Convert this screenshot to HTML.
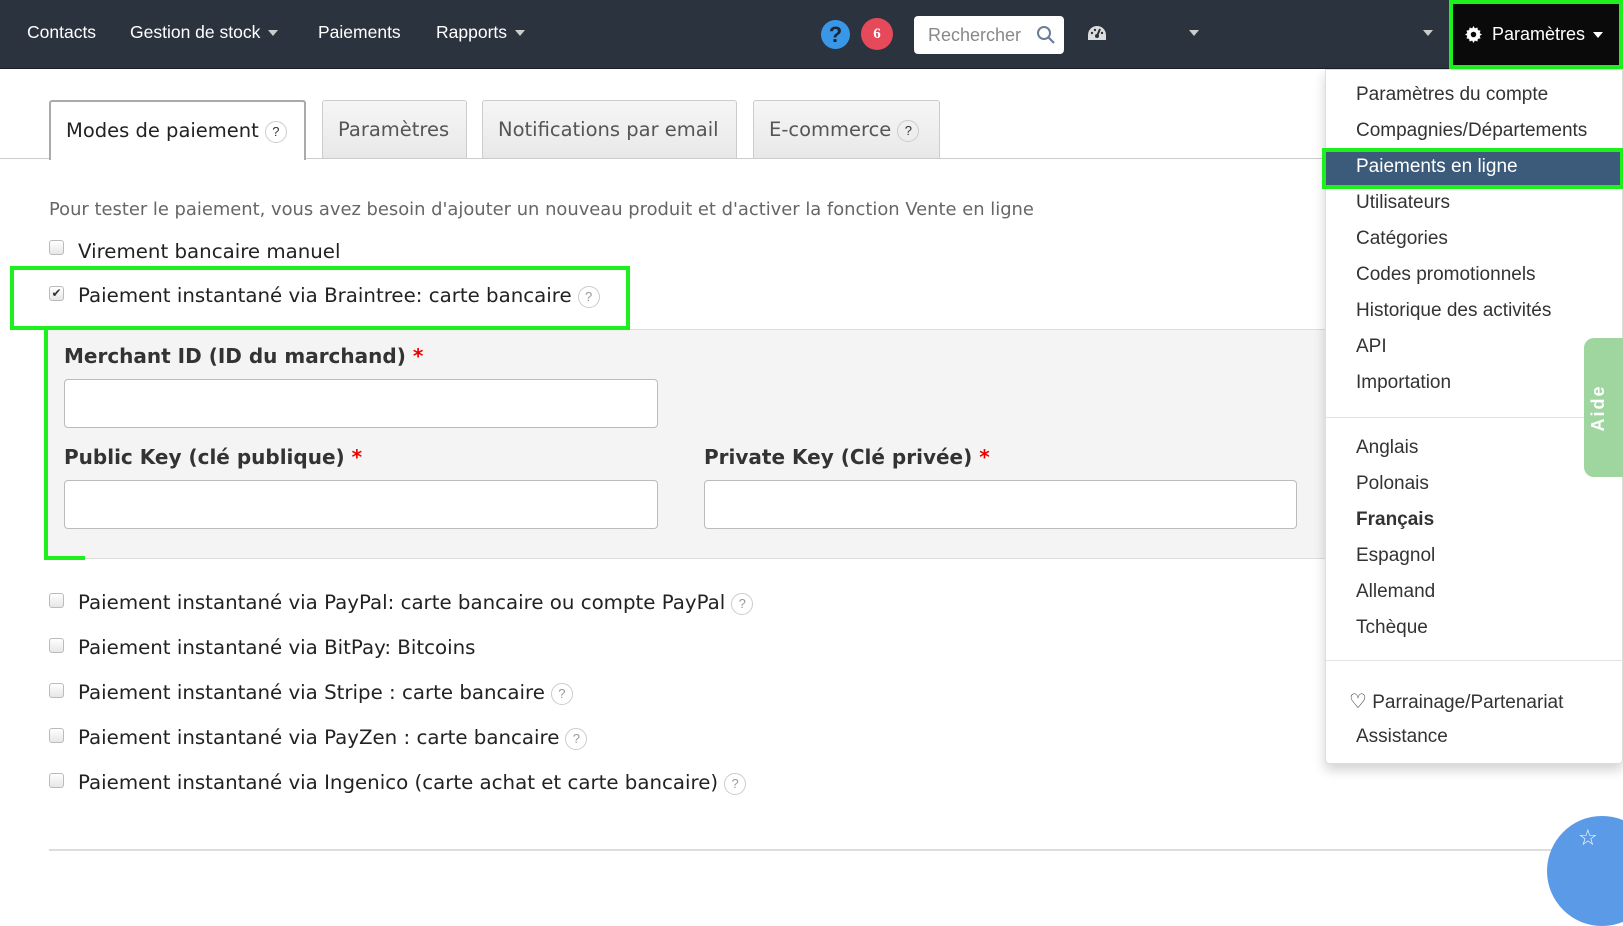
<!DOCTYPE html>
<html><head><meta charset="utf-8"><style>
*{box-sizing:border-box;margin:0;padding:0}
body{width:1623px;height:874px;overflow:hidden;background:#fff;font-family:"DejaVu Sans","Liberation Sans",sans-serif;color:#222;position:relative}
.nav{position:absolute;left:0;top:0;width:1623px;height:69px;background:#2b333e;border-bottom:1px solid #1a1f26}
.nav .it{position:absolute;top:22px;color:#fff;font:17.5px "Liberation Sans",sans-serif}
.car{display:inline-block;width:0;height:0;border-left:5px solid transparent;border-right:5px solid transparent;border-top:6px solid #ccc;vertical-align:middle;margin-left:8px}
.abs{position:absolute}
.tab{position:absolute;top:100px;height:58px;border:1px solid #ccc;border-bottom:none;border-radius:3px 3px 0 0;background:linear-gradient(#f6f6f6,#e8e8e8);font-size:19.5px;color:#555;padding:17px 15px 0}
.tab.on{background:#fff;color:#222;border:2px solid #aaa;border-bottom:none;height:60px}
.q{display:inline-block;width:22px;height:22px;border:1.5px solid #ccc;border-radius:50%;font-size:13px;color:#999;text-align:center;line-height:19px;vertical-align:middle;margin-left:6px;font-family:"Liberation Sans",sans-serif}
.cb{position:absolute;left:49px;width:15px;height:15px;border:1px solid #bbb;border-radius:3px;background:linear-gradient(#fff,#e6e6e6)}
.lbl{position:absolute;left:78px;font-size:19.8px;color:#222}
.fl{position:absolute;font-size:20px;font-weight:bold;color:#333}
.fl b{color:#e00}
.inp{position:absolute;height:49px;background:#fff;border:1px solid #bbb;border-radius:4px}
.dd{position:absolute;left:1325px;top:69px;width:298px;height:695px;background:#fff;border:1px solid #ddd;border-radius:0 0 4px 4px;box-shadow:0 6px 12px rgba(0,0,0,.18)}
.dd .m{position:absolute;left:30px;font:19px "Liberation Sans",sans-serif;color:#333}
.hr{position:absolute;left:0;width:298px;height:1px;background:#e2e2e2}
</style></head><body>
<div class="nav">
<span class="it" style="left:27px">Contacts</span>
<span class="it" style="left:130px">Gestion de stock<span class="car"></span></span>
<span class="it" style="left:318px">Paiements</span>
<span class="it" style="left:436px">Rapports<span class="car"></span></span>
<div class="abs" style="left:821px;top:20px;width:29px;height:29px;border-radius:50%;background:#3a97e8;color:#1b2533;font:bold 22px 'Liberation Sans';text-align:center;line-height:29px">?</div>
<div class="abs" style="left:861px;top:18px;width:32px;height:32px;border-radius:50%;background:#e64a5a;color:#fff;font:bold 15px 'Liberation Serif';text-align:center;line-height:32px">6</div>
<div class="abs" style="left:914px;top:16px;width:150px;height:38px;border-radius:4px;background:#fff;color:#888;font:18px 'Liberation Sans';padding:9px 14px">Rechercher
<svg class="abs" style="left:122px;top:9px" width="20" height="20" viewBox="0 0 20 20"><circle cx="8" cy="8" r="6" fill="none" stroke="#6a7d96" stroke-width="2"/><path d="M12.5 12.5L18 18" stroke="#6a7d96" stroke-width="2.2"/></svg></div>
<svg class="abs" style="left:1087px;top:24px" width="20" height="18" viewBox="0 0 20 18"><path d="M10 2A9 9 0 0 0 1 11v5h18v-5A9 9 0 0 0 10 2Z" fill="#ddd"/><circle cx="10" cy="12" r="2" fill="#2b333e"/><path d="M10 12L13 5" stroke="#2b333e" stroke-width="2"/><circle cx="5" cy="9" r="1.2" fill="#2b333e"/><circle cx="15" cy="9" r="1.2" fill="#2b333e"/><circle cx="8" cy="6" r="1.2" fill="#2b333e"/></svg>
<span class="car abs" style="left:1181px;top:30px"></span>
<span class="car abs" style="left:1415px;top:30px"></span>
<div class="abs" style="left:1449px;top:0;width:174px;height:69px;background:#0a0a0a;border:4px solid #1ef01e;color:#fff;font:18px 'Liberation Sans';padding:20px 0 0 12px">
<svg style="vertical-align:-3px;margin-right:10px" width="17" height="17" viewBox="0 0 16 16"><path fill="#fff" d="M8 0l1.3 2.2 2.4-.8.4 2.5 2.5.4-.8 2.4L16 8l-2.2 1.3.8 2.4-2.5.4-.4 2.5-2.4-.8L8 16l-1.3-2.2-2.4.8-.4-2.5-2.5-.4.8-2.4L0 8l2.2-1.3-.8-2.4 2.5-.4.4-2.5 2.4.8z"/><circle cx="8" cy="8" r="2.6" fill="#0a0a0a"/></svg>Paramètres<span class="car" style="border-top-color:#fff"></span></div>
</div>

<div class="abs" style="left:0;top:158px;width:1325px;height:1px;background:#ccc"></div>
<div class="tab on" style="left:49px;width:257px">Modes de paiement<span class="q" style="color:#333">?</span></div>
<div class="tab" style="left:322px;width:145px">Paramètres</div>
<div class="tab" style="left:482px;width:255px">Notifications par email</div>
<div class="tab" style="left:753px;width:187px">E-commerce<span class="q" style="color:#333">?</span></div>

<div class="abs" style="left:49px;top:199px;font-size:17.9px;color:#666">Pour tester le paiement, vous avez besoin d'ajouter un nouveau produit et d'activer la fonction Vente en ligne</div>
<div class="cb" style="top:240px"></div><div class="lbl" style="top:240px">Virement bancaire manuel</div>

<div class="abs" style="left:46px;top:329px;width:1279px;height:230px;background:#f4f4f4;border-top:1px solid #ddd;border-bottom:1px solid #ddd"></div>
<div class="abs" style="left:44px;top:329px;width:4px;height:231px;background:#1ef01e"></div>
<div class="abs" style="left:44px;top:556px;width:41px;height:4px;background:#1ef01e"></div>
<div class="abs" style="left:10px;top:266px;width:620px;height:64px;border:4px solid #1ef01e;background:#fff"></div>
<div class="cb" style="top:286px;font-size:12px;line-height:13px;text-align:center;color:#333">✔</div><div class="lbl" style="top:284px">Paiement instantané via Braintree: carte bancaire<span class="q">?</span></div>

<div class="fl" style="left:64px;top:344px">Merchant ID (ID du marchand) <b>*</b></div>
<div class="inp" style="left:64px;top:379px;width:594px"></div>
<div class="fl" style="left:64px;top:445px">Public Key (clé publique) <b>*</b></div>
<div class="inp" style="left:64px;top:480px;width:594px"></div>
<div class="fl" style="left:704px;top:445px">Private Key (Clé privée) <b>*</b></div>
<div class="inp" style="left:704px;top:480px;width:593px"></div>

<div class="cb" style="top:593px"></div><div class="lbl" style="top:591px">Paiement instantané via PayPal: carte bancaire ou compte PayPal<span class="q">?</span></div>
<div class="cb" style="top:638px"></div><div class="lbl" style="top:636px">Paiement instantané via BitPay: Bitcoins</div>
<div class="cb" style="top:683px"></div><div class="lbl" style="top:681px">Paiement instantané via Stripe : carte bancaire<span class="q">?</span></div>
<div class="cb" style="top:728px"></div><div class="lbl" style="top:726px">Paiement instantané via PayZen : carte bancaire<span class="q">?</span></div>
<div class="cb" style="top:773px"></div><div class="lbl" style="top:771px">Paiement instantané via Ingenico (carte achat et carte bancaire)<span class="q">?</span></div>
<div class="abs" style="left:49px;top:849px;width:1560px;height:2px;background:#ddd"></div>

<div class="dd">
<div class="m" style="top:14px">Paramètres du compte</div>
<div class="m" style="top:50px">Compagnies/Départements</div>
<div class="abs" style="left:-4px;top:78px;width:302px;height:41px;background:#3c5a7a;border:4px solid #1ef01e"></div>
<div class="m" style="top:86px;color:#fff">Paiements en ligne</div>
<div class="m" style="top:122px">Utilisateurs</div>
<div class="m" style="top:158px">Catégories</div>
<div class="m" style="top:194px">Codes promotionnels</div>
<div class="m" style="top:230px">Historique des activités</div>
<div class="m" style="top:266px">API</div>
<div class="m" style="top:302px">Importation</div>
<div class="hr" style="top:347px"></div>
<div class="m" style="top:367px">Anglais</div>
<div class="m" style="top:403px">Polonais</div>
<div class="m" style="top:439px;font-weight:bold">Français</div>
<div class="m" style="top:475px">Espagnol</div>
<div class="m" style="top:511px">Allemand</div>
<div class="m" style="top:547px">Tchèque</div>
<div class="hr" style="top:590px"></div>
<div class="m" style="top:619px;left:23px"><span style="font-size:20px">♡</span> Parrainage/Partenariat</div>
<div class="m" style="top:656px">Assistance</div>
</div>
<div class="abs" style="left:1584px;top:338px;width:45px;height:139px;background:#9fd6a0;border-radius:10px 0 0 10px"><div style="position:absolute;left:4px;top:100px;transform:rotate(-90deg);transform-origin:left top;color:#fff;font:bold 18px 'Liberation Sans';letter-spacing:2px;width:60px;text-align:center">Aide</div></div>
<div class="abs" style="left:1547px;top:816px;width:110px;height:110px;border-radius:50%;background:#5b9ae6"></div>
<div class="abs" style="left:1578px;top:826px;color:#fff;font-size:22px">☆</div>
</body></html>
